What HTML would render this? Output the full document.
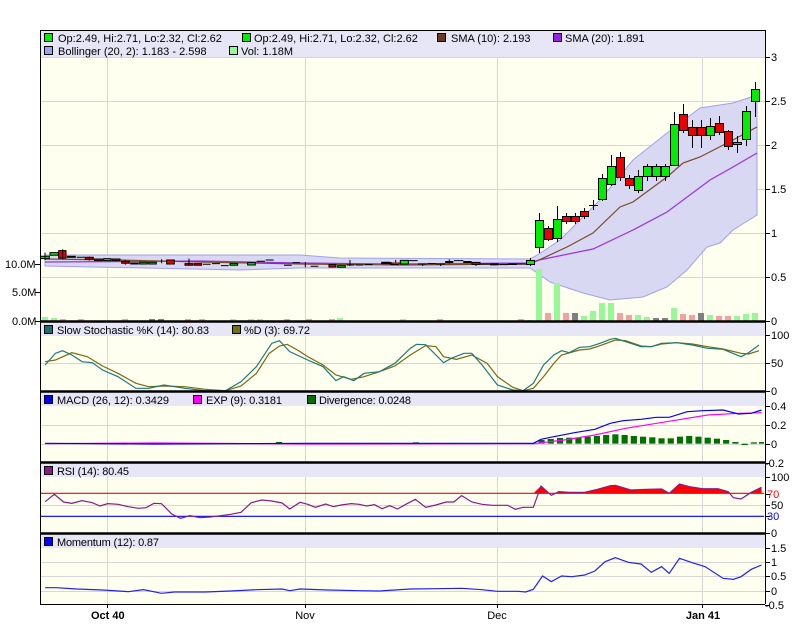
<!DOCTYPE html>
<html><head><meta charset="utf-8"><style>
html,body{margin:0;padding:0;background:#fff;width:800px;height:640px;overflow:hidden}
svg{display:block;font-family:"Liberation Sans",sans-serif;font-size:11px}
.nv{vector-effect:non-scaling-stroke}
</style></head><body>
<svg width="800" height="640" viewBox="0 0 800 640">
<!-- backgrounds -->
<rect x="40" y="30" width="725" height="574" fill="#fffff0"/>
<rect x="40" y="30" width="725" height="27" fill="#e6e6f6"/>
<rect x="40" y="322" width="725" height="14" fill="#e6e6f6"/>
<rect x="40" y="392" width="725" height="14" fill="#e6e6f6"/>
<rect x="40" y="463" width="725" height="14" fill="#e6e6f6"/>
<rect x="40" y="534" width="725" height="14" fill="#e6e6f6"/>
<!-- grid -->
<g stroke="#d6d6d6" stroke-width="1">
<path d="M40 101.5H765M40 145.5H765M40 189.5H765M40 233.5H765M40 277.5H765M40 57.5H765"/>
<path d="M40 363.5H765M40 425.5H765M40 444.5H765M40 505.5H765M40 562.5H765M40 576.5H765M40 591.5H765"/>
<path d="M107.5 57V321M305.5 57V321M497.5 57V321M702.5 57V321"/>
<path d="M107.5 336V391M305.5 336V391M497.5 336V391M702.5 336V391"/>
<path d="M107.5 406V462M305.5 406V462M497.5 406V462M702.5 406V462"/>
<path d="M107.5 477V533M305.5 477V533M497.5 477V533M702.5 477V533"/>
<path d="M107.5 548V604M305.5 548V604M497.5 548V604M702.5 548V604"/>
</g>
<!-- bollinger band -->
<path d="M45 255 L300 255 L340 258 L530 259 L539 254 L560 240 L600 200 L633 160 L667 133 L700 108 L733 103 L757 95 L757 215 L733 230 L720 243 L707 247 L687 270 L667 287 L643 297 L610 300 L583 293 L550 282 L533 270 L530 268 L300 268 L240 270 L45 266 Z" fill="#d8d8f2" stroke="#a0a0ee" stroke-width="1"/>
<!-- volume bars -->
<g fill="#98f898">
<rect x="42" y="317" width="6" height="4"/><rect x="51" y="318" width="6" height="3"/><rect x="230" y="319" width="6" height="2"/><rect x="248" y="319" width="6" height="2"/><rect x="257" y="319" width="6" height="2"/><rect x="337" y="318" width="6" height="3"/><rect x="400" y="319" width="6" height="2"/><rect x="527" y="320" width="5" height="1"/>
<rect x="536" y="269" width="6" height="52"/><rect x="554" y="283" width="6" height="38"/><rect x="581" y="316" width="6" height="5"/><rect x="590" y="311" width="6" height="10"/><rect x="599" y="303" width="6" height="18"/><rect x="608" y="303" width="6" height="18"/><rect x="635" y="315" width="6" height="6"/><rect x="644" y="317" width="6" height="4"/><rect x="671" y="308" width="6" height="13"/><rect x="707" y="315" width="6" height="6"/><rect x="734" y="316" width="6" height="5"/><rect x="743" y="314" width="6" height="7"/><rect x="752" y="313" width="6" height="8"/>
</g>
<g fill="#f8a0a0">
<rect x="60" y="319" width="6" height="2"/><rect x="78" y="319" width="6" height="2"/><rect x="122" y="319" width="6" height="2"/><rect x="185" y="319" width="6" height="2"/><rect x="199" y="319" width="6" height="2"/><rect x="284" y="319" width="6" height="2"/><rect x="306" y="319" width="6" height="2"/><rect x="329" y="319" width="6" height="2"/><rect x="437" y="319" width="6" height="2"/><rect x="518" y="319" width="6" height="2"/>
<rect x="545" y="313" width="6" height="8"/><rect x="563" y="313" width="6" height="8"/><rect x="617" y="313" width="6" height="8"/><rect x="626" y="315" width="6" height="6"/><rect x="680" y="314" width="6" height="7"/><rect x="689" y="315" width="6" height="6"/><rect x="716" y="316" width="6" height="5"/><rect x="725" y="316" width="6" height="5"/>
</g>
<g fill="#808080">
<rect x="149" y="319" width="6" height="2"/><rect x="158" y="319" width="6" height="2"/><rect x="572" y="313" width="6" height="8"/><rect x="653" y="318" width="6" height="3"/><rect x="662" y="318" width="6" height="3"/><rect x="698" y="313" width="6" height="8"/>
</g>
<!-- SMAs -->
<polyline fill="none" stroke="#9a30e8" stroke-width="1.2" points="45,262 200,261 300,263 400,264 530,263 539,260 593,249 633,230 667,212 710,180 733,167 757,153"/>
<polyline fill="none" stroke="#7a4a28" stroke-width="1.2" points="45,259 120,260 200,262 300,264 400,265 530,264 539,260 567,247 593,233 620,207 633,202 667,177 683,163 700,157 733,140 757,127"/>
<!-- candles left (zoom1 coords) -->
<g transform="translate(0,20) scale(0.3333)" stroke="#000" class="nv">
<g stroke-width="1" class="nv">
<rect class="nv" x="122" y="709" width="26" height="7" fill="#00ee00"/>
<rect class="nv" x="150" y="698" width="25" height="8" fill="#00ee00"/>
<rect class="nv" x="176" y="692" width="22" height="22" fill="#ee0000"/>
<rect class="nv" x="202" y="709" width="24" height="3" fill="#000"/>
<rect class="nv" x="256" y="712" width="24" height="6" fill="#ee0000"/>
<rect class="nv" x="284" y="717" width="23" height="5" fill="#ee0000"/>
<rect class="nv" x="311" y="716" width="22" height="6" fill="#00ee00"/>
<rect class="nv" x="337" y="717" width="23" height="5" fill="#ee0000"/>
<rect class="nv" x="365" y="724" width="23" height="6" fill="#ee0000"/>
<rect class="nv" x="392" y="729" width="23" height="3" fill="#000"/>
<rect class="nv" x="419" y="727" width="23" height="5" fill="#00ee00"/>
<rect class="nv" x="446" y="727" width="23" height="5" fill="#00ee00"/>
<rect class="nv" x="500" y="720" width="23" height="12" fill="#ee0000"/>
<rect class="nv" x="555" y="731" width="23" height="5" fill="#ee0000"/>
<rect class="nv" x="582" y="731" width="23" height="5" fill="#ee0000"/>
<rect class="nv" x="690" y="731" width="23" height="5" fill="#00ee00"/>
<rect class="nv" x="743" y="728" width="23" height="7" fill="#00ee00"/>
<rect class="nv" x="987" y="734" width="21" height="7" fill="#ee0000"/>
<rect class="nv" x="1013" y="737" width="23" height="5" fill="#00ee00"/>
<rect class="nv" x="1145" y="727" width="23" height="4" fill="#000"/>
<rect class="nv" x="1172" y="729" width="23" height="5" fill="#ee0000"/>
</g>
<path class="nv" fill="none" d="M135 698V720M188 688V718M230 712H255M268 710V722M376 720V734M485 718V730M567 716V736M609 733H632M636 731H660M663 737H686M770 724H795M797 720H821M852 736H875M878 728H900M916 726V742M932 739H955M1040 735H1063M1050 720V738M1067 735H1090M1094 734H1118"/>
</g>
<!-- candles mid (zoom4 coords) -->
<g transform="translate(380,240) scale(0.3333)">
<path class="nv" stroke="#000" stroke-width="1" fill="none" d="M6 69H34M37 69H60M86 62H113M114 72H140M142 71H168M168 72H195M195 66H220M222 62H250M250 66H276M302 72H330M330 74H356M358 74H384M384 73H410M410 72H437M47 60V72M208 58V70M128 72V78M182 72V78M288 72V78"/>
<rect class="nv" x="6" y="66" width="28" height="6" fill="#000"/>
<rect class="nv" x="38" y="68" width="20" height="4" fill="#ee0000"/>
<rect class="nv" x="61" y="61" width="24" height="11" fill="#00ee00" stroke="#000"/>
<rect class="nv" x="196" y="63" width="24" height="6" fill="#000"/>
<rect class="nv" x="250" y="63" width="24" height="6" fill="#000"/>
<rect class="nv" x="276" y="67" width="24" height="6" fill="#ee0000" stroke="#000"/>
<rect class="nv" x="330" y="70" width="26" height="6" fill="#000"/>
<rect class="nv" x="384" y="70" width="26" height="5" fill="#000"/>
</g>
<!-- candles right -->
<g stroke="#000" stroke-width="1">
<path d="M530.5 258V266M539.5 213V253M548.5 226V241M557.5 206V242M566.5 213V224M575.5 213V224M584.5 208V219M593.5 200V210M589 205.5H598M602.5 174V201M611.5 155V186M620.5 152V181M629.5 175V189M638.5 170V193M647.5 164V181M656.5 164V181M665.5 164V181M674.5 112V165M683.5 104V133M692.5 120V148M701.5 120V148M710.5 118V140M719.5 116V135M728.5 130V150M737.5 136V153M746.5 106V146M755.5 82V117"/>
<rect x="526.5" y="260.5" width="8" height="4" fill="#00ee00"/>
<rect x="535.5" y="220.5" width="8" height="27" fill="#00ee00"/>
<rect x="544.5" y="228.5" width="8" height="11" fill="#ee0000"/>
<rect x="553.5" y="219.5" width="8" height="19" fill="#00ee00"/>
<rect x="562.5" y="216.5" width="8" height="5" fill="#ee0000"/>
<rect x="571.5" y="216.5" width="8" height="5" fill="#ee0000"/>
<rect x="580.5" y="211.5" width="8" height="5" fill="#ee0000"/>
<rect x="598.5" y="178.5" width="8" height="21" fill="#00ee00"/>
<rect x="607.5" y="166.5" width="8" height="18" fill="#00ee00"/>
<rect x="616.5" y="157.5" width="8" height="20" fill="#ee0000"/>
<rect x="625.5" y="178.5" width="8" height="7" fill="#ee0000"/>
<rect x="634.5" y="176.5" width="8" height="14" fill="#00ee00"/>
<rect x="643.5" y="166.5" width="8" height="10" fill="#00ee00"/>
<rect x="652.5" y="166.5" width="8" height="10" fill="#00ee00"/>
<rect x="661.5" y="166.5" width="8" height="10" fill="#00ee00"/>
<rect x="670.5" y="124.5" width="8" height="41" fill="#00ee00"/>
<rect x="679.5" y="114.5" width="8" height="16" fill="#ee0000"/>
<rect x="688.5" y="127.5" width="8" height="8" fill="#ee0000"/>
<rect x="697.5" y="127.5" width="8" height="8" fill="#ee0000"/>
<rect x="706.5" y="126.5" width="8" height="9" fill="#00ee00"/>
<rect x="715.5" y="123.5" width="8" height="9" fill="#ee0000"/>
<rect x="724.5" y="131.5" width="8" height="15" fill="#ee0000"/>
<rect x="733.5" y="142.5" width="8" height="2" fill="#00ee00"/>
<rect x="742.5" y="111.5" width="8" height="28" fill="#00ee00"/>
<rect x="751.5" y="89.5" width="8" height="12" fill="#00ee00"/>
</g>

<!-- sub panels (zoom3 coords) -->
<g transform="translate(0,310) scale(0.51282,0.33333)">
<polyline class="nv" fill="none" stroke="#7a6a10" stroke-width="1.2" points="88,155 108,150 140,128 170,140 200,168 230,190 265,220 290,230 320,228 360,230 400,238 440,242 470,228 500,190 525,130 545,108 560,103 580,120 600,140 630,165 655,195 685,208 710,200 740,185 770,168 800,135 830,107 850,110 865,140 890,148 920,135 950,160 970,200 1000,232 1020,242 1040,235 1060,200 1080,160 1095,135 1130,120 1150,117 1170,107 1200,90 1220,92 1250,108 1270,110 1290,102 1320,98 1350,102 1380,110 1410,117 1445,130 1460,132 1480,122"/>
<polyline class="nv" fill="none" stroke="#1a7a7a" stroke-width="1.2" points="88,165 108,130 122,122 140,135 160,155 180,158 200,180 230,200 265,235 290,235 320,225 360,235 400,242 440,242 470,215 500,170 530,100 545,92 565,125 600,150 630,170 655,212 670,200 690,212 710,190 740,185 770,160 800,115 812,103 830,104 865,158 880,145 905,130 920,130 940,165 970,225 1000,240 1020,242 1040,220 1060,165 1080,135 1095,122 1110,128 1130,112 1150,110 1170,100 1190,88 1200,85 1220,95 1250,110 1270,110 1290,100 1320,98 1350,105 1380,115 1410,118 1445,140 1460,128 1480,105"/>
<!-- MACD -->
<g fill="#007000">
<rect x="538" y="396" width="12" height="5"/><rect x="805" y="397" width="12" height="4"/>
<rect x="1050" y="390" width="12" height="11"/><rect x="1068" y="387" width="12" height="14"/><rect x="1086" y="384" width="12" height="17"/><rect x="1104" y="383" width="12" height="18"/><rect x="1122" y="383" width="12" height="18"/><rect x="1140" y="380" width="12" height="21"/><rect x="1158" y="378" width="12" height="23"/><rect x="1176" y="375" width="12" height="26"/><rect x="1194" y="373" width="12" height="28"/><rect x="1212" y="375" width="12" height="26"/><rect x="1230" y="378" width="12" height="23"/><rect x="1248" y="380" width="12" height="21"/><rect x="1266" y="382" width="12" height="19"/><rect x="1284" y="385" width="12" height="16"/><rect x="1302" y="385" width="12" height="16"/><rect x="1320" y="380" width="12" height="21"/><rect x="1338" y="378" width="12" height="23"/><rect x="1356" y="380" width="12" height="21"/><rect x="1374" y="383" width="12" height="18"/><rect x="1392" y="386" width="12" height="15"/><rect x="1410" y="390" width="12" height="11"/><rect x="1428" y="396" width="12" height="5"/><rect x="1446" y="401" width="12" height="4"/><rect x="1464" y="397" width="12" height="4"/><rect x="1480" y="396" width="10" height="5"/>
</g>
<polyline class="nv" fill="none" stroke="#ff00ff" stroke-width="1.2" points="88,401 300,399 600,402 1040,401 1100,390 1160,375 1220,355 1300,335 1380,315 1440,310 1485,308"/>
<polyline class="nv" fill="none" stroke="#0000ff" stroke-width="1.2" points="88,400 300,402 600,400 1040,400 1055,388 1080,380 1120,368 1160,358 1190,340 1215,332 1250,328 1280,322 1305,322 1340,305 1370,302 1410,300 1440,312 1465,310 1485,300"/>
<!-- RSI -->
<clipPath id="c70"><rect x="0" y="0" width="1600" height="550"/></clipPath>
<polygon clip-path="url(#c70)" fill="#ff0000" points="1040,550 1055,528 1075,556 1090,545 1110,547 1140,547 1165,538 1190,527 1200,526 1230,540 1260,538 1290,537 1305,550 1325,522 1345,530 1370,536 1400,536 1420,545 1430,563 1445,567 1465,547 1485,532 1485,550"/>
<path class="nv" d="M80 550H1490" stroke="#ff0000" stroke-width="1.2"/>
<path class="nv" d="M80 619H1490" stroke="#0000ff" stroke-width="1.2"/>
<polyline class="nv" fill="none" stroke="#8a1a8a" stroke-width="1.2" points="88,575 106,553 124,576 140,580 160,572 180,578 195,588 210,581 230,583 250,590 270,595 285,593 300,580 315,581 335,612 352,625 370,617 390,623 410,621 430,617 450,613 470,607 490,578 510,570 530,573 550,579 565,597 585,577 600,583 615,592 635,582 650,590 665,585 685,581 700,583 715,588 730,584 745,596 760,587 775,597 795,580 810,568 830,592 850,585 870,576 885,576 900,557 920,576 940,583 960,586 990,586 1005,598 1020,592 1040,592 1055,528 1075,556 1090,545 1110,547 1140,547 1165,538 1190,527 1200,526 1230,540 1260,538 1290,537 1305,550 1325,522 1345,530 1370,536 1400,536 1420,545 1430,563 1445,567 1465,547 1485,532"/>
<!-- Momentum -->
<polyline class="nv" fill="none" stroke="#2020ff" stroke-width="1.2" points="88,833 110,833 150,837 200,840 250,845 280,839 315,850 340,846 400,846 450,843 500,839 550,837 565,842 585,837 640,840 700,842 740,843 800,837 850,836 900,835 940,839 970,844 1010,844 1025,846 1040,838 1058,798 1075,815 1095,798 1115,800 1140,795 1160,783 1180,755 1200,743 1225,757 1250,762 1270,787 1290,770 1305,790 1325,745 1350,758 1375,770 1410,805 1430,808 1445,800 1465,778 1485,765"/>
</g>

<!-- frames -->
<g stroke="#000" fill="none">
<path d="M40.5 30V604M765.5 30V604M40 30.5H765" stroke-width="1"/>
<path d="M40 321.5H765M40 391.5H765M40 462.5H765M40 533.5H765" stroke-width="2.5"/>
<path d="M40 604.5H765" stroke-width="1"/>
<path d="M765 57.5h5M765 101.5h5M765 145.5h5M765 189.5h5M765 233.5h5M765 277.5h5M765 321.5h5M765 335.5h5M765 363.5h5M765 391.5h5M765 406.5h5M765 425.5h5M765 444.5h5M765 463.5h5M765 477.5h5M765 494.5h5M765 505.5h5M765 516.5h5M765 533.5h5M765 548.5h5M765 562.5h5M765 576.5h5M765 591.5h5M765 605.5h5M35 264.5h5M35 292.5h5M35 321.5h5M107.5 604v4M305.5 604v4M497.5 604v4M702.5 604v4"/>
</g>
<!-- axis labels -->
<g fill="#000">
<text x="771" y="61">3</text><text x="771" y="105">2.5</text><text x="771" y="149">2</text><text x="771" y="193">1.5</text><text x="771" y="237">1</text><text x="771" y="281">0.5</text><text x="771" y="325">0</text>
<text x="771" y="339">100</text><text x="771" y="367">50</text><text x="771" y="395">0</text>
<text x="771" y="410">0.4</text><text x="771" y="429">0.2</text><text x="771" y="448">0</text><text x="765" y="467">-0.2</text>
<text x="771" y="481">100</text><text x="767" y="498" fill="#ff0000">70</text><text x="771" y="509">50</text><text x="767" y="520" fill="#0000ff">30</text><text x="771" y="537">0</text>
<text x="771" y="552">1.5</text><text x="771" y="566">1</text><text x="771" y="580">0.5</text><text x="771" y="595">0</text><text x="765" y="609">-0.5</text>
<text x="5" y="268">10.0M</text><text x="12" y="296">5.0M</text><text x="12" y="325">0.0M</text>
<text x="91" y="619" font-weight="bold" text-anchor="start">Oct 40</text><text x="305" y="619" text-anchor="middle">Nov</text><text x="497" y="619" text-anchor="middle">Dec</text><text x="703" y="619" text-anchor="middle" font-weight="bold">Jan 41</text>
</g>
<!-- legends -->
<g stroke="#000" stroke-width="1">
<rect x="44.5" y="33.5" width="8" height="8" fill="#00ee00"/>
<rect x="242.5" y="33.5" width="8" height="8" fill="#00ee00"/>
<rect x="437.5" y="33.5" width="8" height="8" fill="#6b3a1e"/>
<rect x="553.5" y="33.5" width="8" height="8" fill="#9a20e0"/>
<rect x="44.5" y="46.5" width="8" height="8" fill="#a0a0f0"/>
<rect x="229.5" y="46.5" width="8" height="8" fill="#98f898"/>
<rect x="44.5" y="325.5" width="8" height="8" fill="#1a7070"/>
<rect x="232.5" y="325.5" width="8" height="8" fill="#707010"/>
<rect x="44.5" y="395.5" width="8" height="8" fill="#0000ff"/>
<rect x="193.5" y="395.5" width="8" height="8" fill="#ff00ff"/>
<rect x="307.5" y="395.5" width="8" height="8" fill="#007000"/>
<rect x="44.5" y="466.5" width="8" height="8" fill="#8a1a8a"/>
<rect x="44.5" y="537.5" width="8" height="8" fill="#0000ff"/>
</g>
<g fill="#000">
<text x="58" y="42">Op:2.49, Hi:2.71, Lo:2.32, Cl:2.62</text>
<text x="254" y="42">Op:2.49, Hi:2.71, Lo:2.32, Cl:2.62</text>
<text x="451" y="42">SMA (10): 2.193</text>
<text x="565" y="42">SMA (20): 1.891</text>
<text x="58" y="55">Bollinger (20, 2): 1.183 - 2.598</text>
<text x="241" y="55">Vol: 1.18M</text>
<text x="57" y="334" textLength="152">Slow Stochastic %K (14): 80.83</text>
<text x="244" y="334" textLength="66">%D (3): 69.72</text>
<text x="57" y="404" textLength="112">MACD (26, 12): 0.3429</text>
<text x="206" y="404" textLength="76">EXP (9): 0.3181</text>
<text x="319" y="404" textLength="92">Divergence: 0.0248</text>
<text x="57" y="475" textLength="72">RSI (14): 80.45</text>
<text x="57" y="546" textLength="102">Momentum (12): 0.87</text>
</g>
</svg>
</body></html>
